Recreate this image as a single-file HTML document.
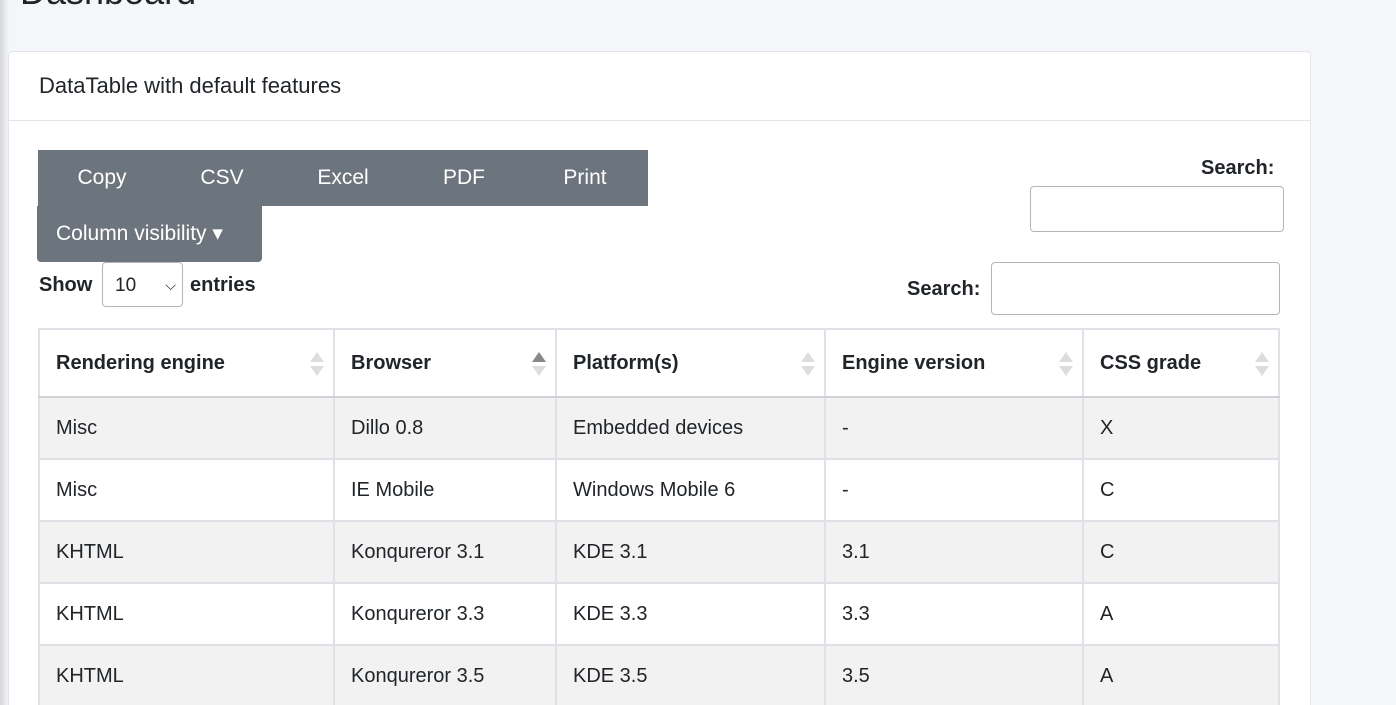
<!DOCTYPE html>
<html style="overflow:hidden;height:705px"><head><style>
body{margin:0;width:1396px;height:705px;overflow:hidden;background:#f4f6f9;font-family:"Liberation Sans",sans-serif;color:#212529;position:relative}
.sh{position:absolute;left:0;top:0;width:9px;height:705px;background:linear-gradient(90deg,#d4d6d9,#f4f6f9)}
h1{position:absolute;left:20px;top:-29px;margin:0;font-weight:400;font-size:36px}
.card{position:absolute;left:8px;top:51px;width:1301px;height:653px;overflow:hidden;background:#fff;border:1px solid #e3e5e8;border-bottom:0;border-radius:5px 5px 0 0}
.ch{height:68px;border-bottom:1px solid #e3e5e8;font-size:22px;line-height:68px;padding-left:30px}
.btn{position:absolute;background:#6c757d;color:#fff;font-size:21px;line-height:56px;height:56px;text-align:center}
.lbl{position:absolute;font-weight:bold;font-size:20px}
.inp{position:absolute;border:1px solid #b5b5b5;border-radius:4px;background:#fff}
table{position:absolute;left:29px;top:276px;border-collapse:collapse;font-size:20px}
td,th{border:2px solid #dee2e6;padding:0 16px;height:60px;text-align:left}
th{height:66px;border-bottom-width:2px;border-bottom-color:#cfd3d7;position:relative}
tr.o td{background:#f2f2f2}
.s{position:absolute;right:16px;top:22px;width:0}
.s:before{content:"";position:absolute;border:7px solid transparent;border-bottom:10px solid #ddd;border-top:0;left:-7px;top:0}
.s:after{content:"";position:absolute;border:7px solid transparent;border-top:10px solid #ddd;border-bottom:0;left:-7px;top:14px}
.s.a:before{border-bottom-color:#888}
</style></head><body>
<div class="sh"></div>
<h1>Dashboard</h1>
<div class="card">
<div class="ch">DataTable with default features</div>
<div class="btn" style="left:29px;top:98px;width:610px"></div>
<div class="btn" style="left:29px;top:98px;width:128px">Copy</div>
<div class="btn" style="left:153px;top:98px;width:120px">CSV</div>
<div class="btn" style="left:274px;top:98px;width:120px">Excel</div>
<div class="btn" style="left:395px;top:98px;width:120px">PDF</div>
<div class="btn" style="left:516px;top:98px;width:120px">Print</div>
<div class="btn" style="left:28px;top:154px;width:206px;padding-left:19px;text-align:left;border-radius:0 0 4px 4px">Column visibility ▾</div>
<div class="lbl" style="left:1192px;top:105px">Search:</div>
<div class="inp" style="left:1021px;top:134px;width:252px;height:44px"></div>
<div class="lbl" style="left:30px;top:222px">Show</div>
<div class="inp" style="left:93px;top:210px;width:81px;height:45px;font-size:19px;line-height:45px;padding-left:12px;box-sizing:border-box">10<span style="position:absolute;right:6px;font-size:14px">&#x2335;</span></div>
<div class="lbl" style="left:181px;top:222px">entries</div>
<div class="lbl" style="left:898px;top:226px">Search:</div>
<div class="inp" style="left:982px;top:210px;width:287px;height:51px"></div>
<table>
<tr><th style="width:261px">Rendering engine<span class="s"></span></th><th style="width:188px">Browser<span class="s a"></span></th><th style="width:235px">Platform(s)<span class="s"></span></th><th style="width:224px">Engine version<span class="s"></span></th><th style="width:162px">CSS grade<span class="s"></span></th></tr>
<tr class="o"><td>Misc</td><td>Dillo 0.8</td><td>Embedded devices</td><td>-</td><td>X</td></tr>
<tr><td>Misc</td><td>IE Mobile</td><td>Windows Mobile 6</td><td>-</td><td>C</td></tr>
<tr class="o"><td>KHTML</td><td>Konqureror 3.1</td><td>KDE 3.1</td><td>3.1</td><td>C</td></tr>
<tr><td>KHTML</td><td>Konqureror 3.3</td><td>KDE 3.3</td><td>3.3</td><td>A</td></tr>
<tr class="o"><td>KHTML</td><td>Konqureror 3.5</td><td>KDE 3.5</td><td>3.5</td><td>A</td></tr>
</table>
</div>
</body></html>
